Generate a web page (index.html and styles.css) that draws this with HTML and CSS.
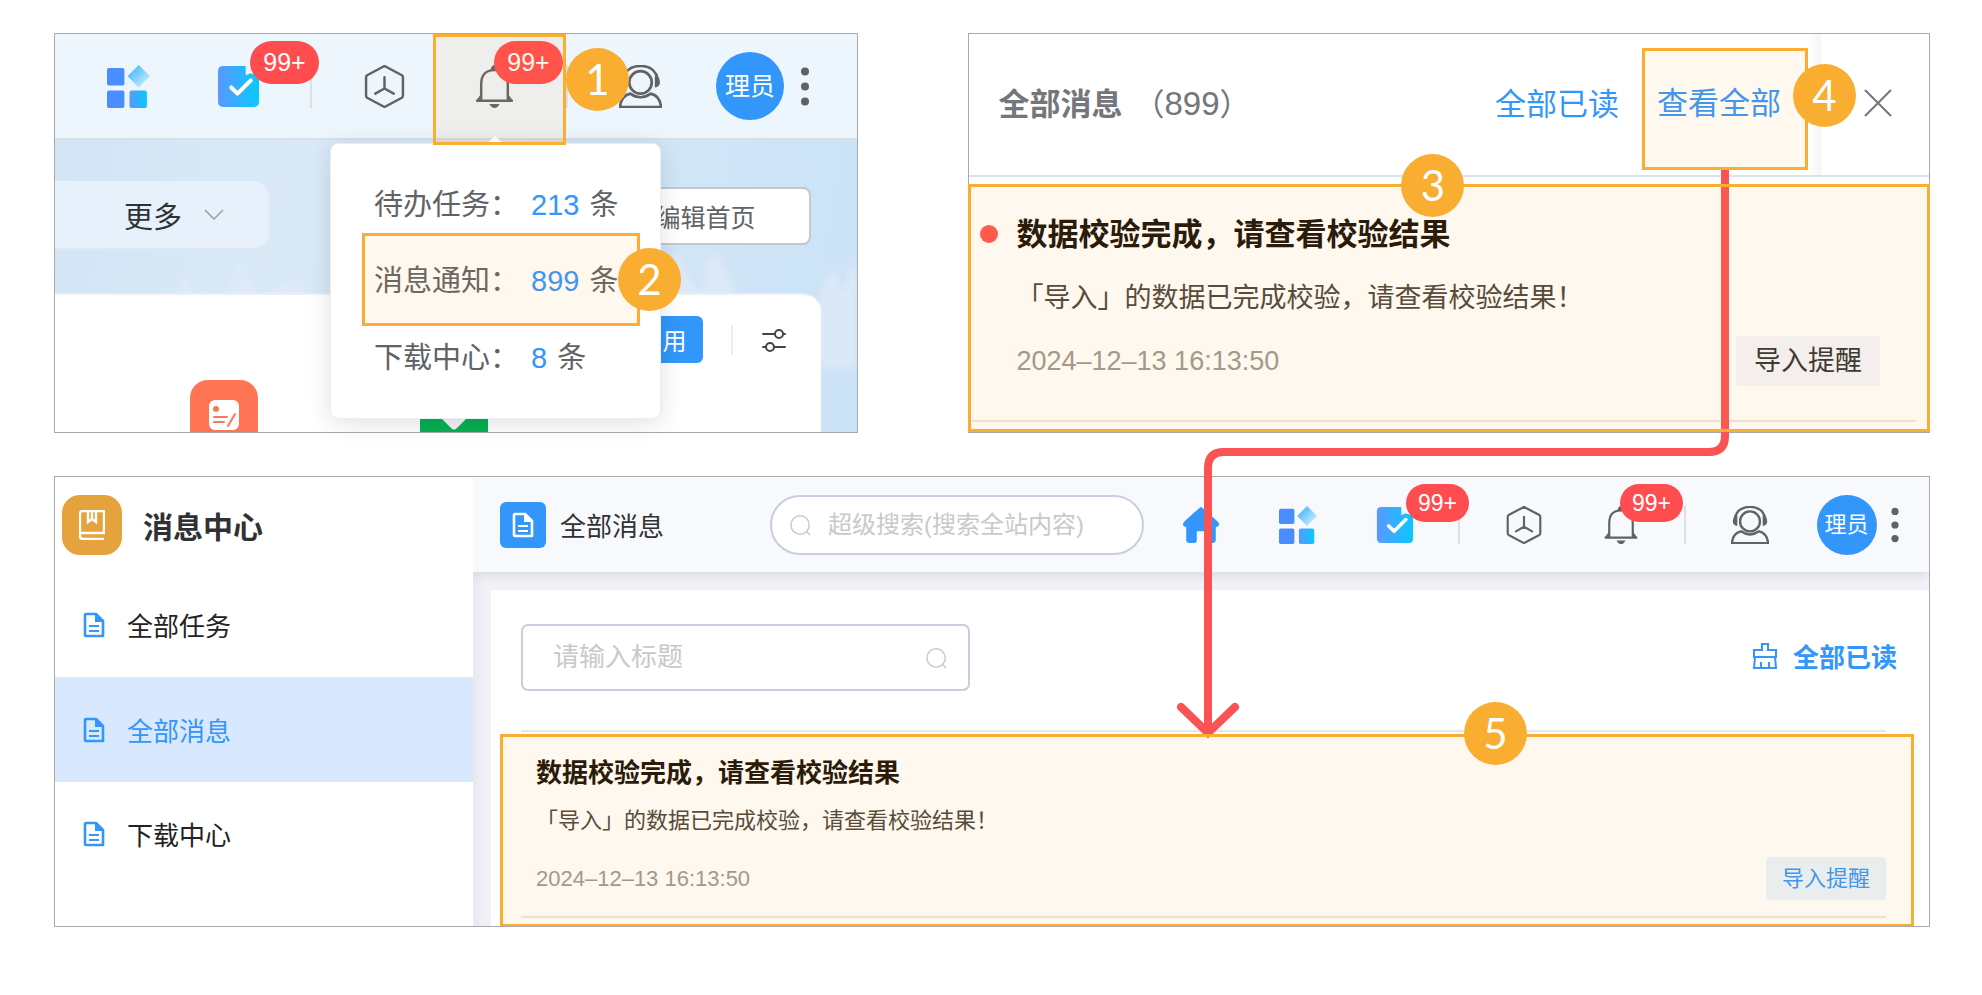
FILE: index.html
```html
<!DOCTYPE html>
<html lang="zh-CN">

<head>
  <meta charset="UTF-8">
  <title>消息中心</title>
  <link rel="stylesheet" href="styles.css">
</head>
<body>
  <!-- shared icons -->
  <svg class="sprite" aria-hidden="true">
    <defs>
      <linearGradient id="blueFade" x1="0" y1="0" x2="1" y2="0">
        <stop offset="0" stop-color="#5a98ff"/>
        <stop offset="1" stop-color="#08c8ff"/>
      </linearGradient>
      <linearGradient id="diamondFade" x1="0.2" y1="0.2" x2="0.9" y2="0.9">
        <stop offset="0" stop-color="#4fbcfd"/>
        <stop offset="1" stop-color="#d0effe"/>
      </linearGradient>
    </defs>
    <symbol id="i-apps" viewBox="0 0 42 42">
      <rect x="0" y="3" width="17" height="17" rx="2" fill="#4a8dff"/>
      <rect x="0" y="25" width="17" height="17" rx="2" fill="#4a8dff"/>
      <rect x="22" y="25" width="17" height="17" rx="2" fill="url(#blueFade)"/>
      <path d="M31 0L42 11L31 22L20 11Z" fill="url(#diamondFade)"/>
    </symbol>
    <symbol id="i-task" viewBox="0 0 42 42">
      <path d="M6 1H28V10L33 8L41 11V36Q41 41 36 41H6Q1 41 1 36V6Q1 1 6 1Z" fill="url(#blueFade)"/>
      <path d="M14 22L20 28L33 15" fill="none" stroke="#fff" stroke-width="4" stroke-linecap="round" stroke-linejoin="round"/>
    </symbol>
    <symbol id="i-hex" viewBox="0 0 42 42">
      <path d="M21 1L38 10Q39 11 39 12V30Q39 31 38 32L21 41L4 32Q3 31 3 30V12Q3 11 4 10ZM21 12V23L12 28M21 23L30 28" fill="none" stroke="#606266" stroke-width="2.4" stroke-linejoin="round" stroke-linecap="round"/>
    </symbol>
    <symbol id="i-bell" viewBox="0 0 42 42">
      <path d="M4 35H38M8 34V19Q8 5 21 5Q34 5 34 19V34" fill="none" stroke="#606266" stroke-width="2.4" stroke-linecap="round"/>
      <path d="M17 5Q18 0 21 0Q24 0 25 5ZM3 35L8 28V35ZM39 35L34 28V35ZM16 38H26Q24 42 21 42Q18 42 16 38Z" fill="#606266"/>
    </symbol>
    <symbol id="i-service" viewBox="0 0 42 42">
      <circle cx="21" cy="17" r="11" fill="none" stroke="#606266" stroke-width="2.6"/>
      <path d="M4 14Q7 1 21 1Q35 1 38 14M11 28Q2 30 1 41H41Q40 30 31 28Q21 35 11 28Z" fill="none" stroke="#606266" stroke-width="2.6"/>
      <path d="M7 10Q2 12 2 17Q2 21 7 22ZM35 10Q40 12 40 17Q40 21 35 22Z" fill="#606266"/>
    </symbol>
    <symbol id="i-more" viewBox="0 0 10 42">
      <circle cx="5" cy="6" r="4" fill="#606266"/>
      <circle cx="5" cy="21" r="4" fill="#606266"/>
      <circle cx="5" cy="36" r="4" fill="#606266"/>
    </symbol>
    <symbol id="i-doc" viewBox="0 0 24 26">
      <path d="M4 2H14L21 9V24H4Q3 24 3 23V3Q3 2 4 2Z" fill="none" stroke="currentColor" stroke-width="2.6" stroke-linejoin="round"/>
      <path d="M13 2L21 10H13ZM7 13H17V15H7ZM7 18H17V20H7Z" fill="currentColor"/>
    </symbol>
    <symbol id="i-search" viewBox="0 0 24 24">
      <path d="M18 19L22 23" stroke="#c8c9cc" stroke-width="1.6"/>
      <circle cx="11" cy="12" r="10" fill="none" stroke="#c8c9cc" stroke-width="1.6"/>
    </symbol>
  </svg>

  <main class="page">
    <section class="panel home">
      <header class="topbar topbar-lg">
        <button class="cell" aria-label="应用"><svg class="icon"><use href="#i-apps"/></svg></button>
        <button class="cell" aria-label="任务"><svg class="icon"><use href="#i-task"/></svg><span class="badge">99+</span></button>
        <span class="sep"></span>
        <button class="cell" aria-label="模块"><svg class="icon"><use href="#i-hex"/></svg></button>
        <div class="cell mark mark-bell">
          <button class="cell bell" aria-label="消息"><svg class="icon"><use href="#i-bell"/></svg><span class="badge">99+</span></button>
          <div class="popup">
            <p class="popup-row">待办任务：<a href="#">213</a> 条</p>
            <p class="popup-row mark mark-notice">消息通知：<a href="#">899</a> 条<span class="step">2</span></p>
            <p class="popup-row">下载中心：<a href="#">8</a> 条</p>
          </div>
          <span class="step">1</span>
        </div>
        <span class="sep"></span>
        <button class="cell" aria-label="客服"><svg class="icon"><use href="#i-service"/></svg></button>
        <div class="cell"><span class="avatar">理员</span></div>
        <button class="more" aria-label="更多操作"><svg><use href="#i-more"/></svg></button>
      </header>
      <div class="home-body">
        <svg class="forest" viewBox="0 0 804 120" preserveAspectRatio="none" aria-hidden="true">
          <path d="M0 120L6 60L14 85L22 75L30 100L46 56L56 90L70 80L90 95L110 70L130 25L142 60L154 40L164 66L186 10L204 52L220 42L242 30L260 80L290 60L320 90L600 60L614 20L622 0L636 30L648 48L654 10L664 4L676 30L688 70L760 66L768 40L780 20L790 44L798 10L804 30V120Z"/>
        </svg>
        <div class="home-bar">
          <button class="more-tab">更多
            <svg viewBox="0 0 20 12" width="20" height="12"><path d="M1 1L10 10L19 1" fill="none" stroke="#96999c" stroke-width="1.4"/></svg>
          </button>
          <button class="edit-home">编辑首页</button>
        </div>
        <div class="home-card">
          <div class="card-bar">
            <button class="apply">用</button>
            <span class="card-sep"></span>
            <svg viewBox="0 0 24 24" width="24" height="24"><path d="M1 6H13M21 6H23M1 19H4M12 19H23" stroke="#444" stroke-width="2" stroke-linecap="round"/><circle cx="17" cy="6" r="4" fill="none" stroke="#444" stroke-width="2"/><circle cx="8" cy="19" r="4" fill="none" stroke="#444" stroke-width="2"/></svg>
          </div>
          <div class="apps">
            <div class="app app-form">
              <svg viewBox="0 0 30 30" width="30" height="30"><rect width="30" height="30" rx="6" fill="#fff"/><circle cx="7" cy="9" r="3" fill="#ff7455"/><path d="M5 17H18M5 22H15M19 26L26 14" stroke="#ff7455" stroke-width="2" stroke-linecap="round"/></svg>
            </div>
            <div class="app app-check">
              <svg viewBox="0 0 30 22" width="30" height="22"><path d="M1 9L12 20Q15 23 18 20L29 9V0H1Z" fill="#f4f4f4"/></svg>
            </div>
          </div>
        </div>
      </div>
    </section>

    <section class="panel drawer">
      <header class="drawer-head">
        <h2>全部消息</h2>
        <span class="count">（<b>899</b>）</span>
        <a class="read-all" href="#">全部已读</a>
        <div class="mark mark-all">
          <a href="#">查看全部</a>
          <span class="step">4</span>
          <svg class="flow" viewBox="0 0 560 570" width="560" height="570" aria-hidden="true">
            <path d="M548 0V266Q548 282 532 282H47Q31 282 31 298V560" />
            <path d="M4 537L31 563L58 537" stroke-linecap="round" />
          </svg>
        </div>
        <span class="edge"></span>
        <button class="close" aria-label="关闭"><svg viewBox="0 0 28 28" width="28" height="28"><path d="M1 1L27 27M27 1L1 27" stroke="#73767a" stroke-width="2"/></svg></button>
      </header>
      <article class="message message-lg mark">
        <span class="unread"></span>
        <h3>数据校验完成，请查看校验结果</h3>
        <p>「导入」的数据已完成校验，请查看校验结果！</p>
        <footer><time>2024–12–13 16:13:50</time><span class="tag">导入提醒</span></footer>
        <hr>
        <span class="step">3</span>
      </article>
    </section>

    <section class="panel center">
      <nav class="sidebar">
        <h2>
          <span class="logo"><svg class="book" viewBox="0 0 26 30"><path d="M25 20V1H4Q1 1 1 4V26Q1 29 4 29H25M2 23H25V20M9 1V12L13 9L17 12V1M13 1V9" fill="none" stroke="#fff" stroke-width="2.4"/></svg></span>
          消息中心
        </h2>
        <a href="#"><svg><use href="#i-doc"/></svg>全部任务</a>
        <a href="#" class="active"><svg><use href="#i-doc"/></svg>全部消息</a>
        <a href="#"><svg><use href="#i-doc"/></svg>下载中心</a>
      </nav>
      <div class="main">
        <header class="topbar">
          <span class="page-icon"><svg><use href="#i-doc"/></svg></span>
          <h3>全部消息</h3>
          <label class="search">
            <svg><use href="#i-search"/></svg>
            <input type="text" aria-label="超级搜索" placeholder="超级搜索(搜索全站内容)">
          </label>
          <button class="cell" aria-label="首页"><svg class="icon" viewBox="0 0 36 36"><path d="M18 1Q19 1 34 15Q37 19 32 20V32Q32 35 29 35H25Q23 35 23 33V24H14V33Q14 35 12 35H7Q4 35 4 32V20Q-1 19 2 15Q17 1 18 1Z" fill="#3296fa"/></svg></button>
          <button class="cell" aria-label="应用"><svg class="icon"><use href="#i-apps"/></svg></button>
          <button class="cell" aria-label="任务"><svg class="icon"><use href="#i-task"/></svg><span class="badge">99+</span></button>
          <span class="sep"></span>
          <button class="cell" aria-label="模块"><svg class="icon"><use href="#i-hex"/></svg></button>
          <button class="cell bell" aria-label="消息"><svg class="icon"><use href="#i-bell"/></svg><span class="badge">99+</span></button>
          <span class="sep"></span>
          <button class="cell" aria-label="客服"><svg class="icon"><use href="#i-service"/></svg></button>
          <div class="cell"><span class="avatar">理员</span></div>
          <button class="more" aria-label="更多操作"><svg><use href="#i-more"/></svg></button>
        </header>
        <div class="content">
          <div class="filter">
            <label class="title-input">
              <input type="text" aria-label="标题" placeholder="请输入标题">
              <svg><use href="#i-search"/></svg>
            </label>
            <a class="clear" href="#">
              <svg viewBox="0 0 26 26" width="26" height="26"><path d="M10 7V1H16V7H24V14H2V7ZM3 14L2 25H24L23 14M9 25V19M17 25V19" fill="none" stroke="#3296fa" stroke-width="2"/></svg>
              全部已读
            </a>
          </div>
          <article class="message mark">
            <h3>数据校验完成，请查看校验结果</h3>
            <p>「导入」的数据已完成校验，请查看校验结果！</p>
            <footer><time>2024–12–13 16:13:50</time><span class="tag">导入提醒</span></footer>
            <hr>
            <span class="step">5</span>
          </article>
        </div>
      </div>
    </section>
  </main>
</body>
</html>
```
FILE: styles.css
```css
* { box-sizing: border-box; }
body {
  margin: 0;
  background: #fff;
  color: #303133;
  font-family: "Liberation Sans", "Noto Sans CJK SC", sans-serif;
}
h2, h3, p { margin: 0; font-weight: 400; }
a { color: #3296fa; text-decoration: none; }
button { padding: 0; border: 0; background: none; font: inherit; color: inherit; }
input { min-width: 0; flex: 1; border: 0; outline: 0; background: none; font: inherit; }
input::placeholder { color: #c8c9cc; opacity: 1; }
svg { display: block; flex: none; }
.sprite { position: absolute; width: 0; height: 0; }

.page {
  display: grid;
  grid-template-columns: 804fr 961fr;
  gap: 43px 110px;
  padding: 33px 52px 67px 54px;
}
.panel { border: 1px solid #a8aaac; background: #fff; }

/* highlighted area with its step number */
.mark { position: relative; }
.mark::after {
  content: "";
  position: absolute;
  inset: 0;
  z-index: 3;
  border: 3px solid #f9ad31;
  background: rgba(255, 165, 40, 0.08);
  pointer-events: none;
}
.step {
  position: absolute;
  z-index: 4;
  width: 63px;
  height: 63px;
  border-radius: 50%;
  background: #f9ad31;
  color: #fff;
  font: 42px/63px Lato, sans-serif;
  text-align: center;
}

/* top bar */
.topbar {
  --cell: 97px;
  --icon: 38px;
  display: flex;
  align-items: center;
  height: 95px;
  padding: 0 29px 0 27px;
  background: #f8f9fc;
  box-shadow: 0 2px 12px rgba(0, 0, 0, 0.12);
  position: relative;
}
.cell {
  position: relative;
  display: flex;
  flex: none;
  align-items: center;
  justify-content: center;
  width: var(--cell);
  height: 100%;
}
.icon { width: var(--icon); height: var(--icon); }
.sep { flex: none; width: 2px; height: var(--icon); margin: 0 15px; background: #dcdfe3; }
.badge {
  position: absolute;
  top: 7px;
  left: 60px;
  width: 63px;
  height: 38px;
  border-radius: 19px;
  background: #ff4d4f;
  color: #fff;
  font-size: 23px;
  line-height: 38px;
  text-align: center;
  z-index: 1;
}
.bell .badge { left: 48px; }
.avatar {
  width: 60px;
  height: 60px;
  border-radius: 50%;
  background: #3296fa;
  color: #fff;
  font-size: 22px;
  line-height: 60px;
  text-align: center;
}
.more { margin-left: -5px; }
.more svg { width: 10px; height: var(--icon); }
.topbar-lg {
  --cell: 110px;
  --icon: 43px;
  height: 106px;
  padding: 0 0 0 18px;
  border-bottom: 2px solid #dadde2;
  background: #edf5fd;
  box-shadow: none;
}
.topbar-lg .sep { margin: 0 17px; }
.topbar-lg .badge { left: 67px; width: 69px; height: 43px; border-radius: 22px; font-size: 25px; line-height: 43px; }
.topbar-lg .bell .badge { left: 55px; }
.topbar-lg .avatar { width: 68px; height: 68px; font-size: 25px; line-height: 68px; }

/* home panel */
.home { display: flex; flex-direction: column; }
.mark-bell::after { inset: 0 -17px -7px -6px; }
.mark-bell > .step { top: 14px; left: 127px; }
.popup {
  position: absolute;
  top: 109px;
  left: -109px;
  z-index: 2;
  width: 331px;
  padding: 33px 20px 28px 31px;
  border: 1px solid #e8edf6;
  border-radius: 8px;
  background: #fff;
  box-shadow: 0 4px 24px rgba(0, 0, 0, 0.12);
  color: #606266;
  font-size: 29px;
}
.popup::before {
  content: "";
  position: absolute;
  top: -8px;
  left: 155px;
  border: solid transparent;
  border-width: 0 9px 8px;
  border-bottom-color: #fff;
}
.popup-row { height: 56px; padding-left: 12px; line-height: 56px; white-space: nowrap; }
.popup-row a { margin: 0 2px 0 12px; }
.popup-row:last-child { height: 64px; line-height: 64px; }
.mark-notice { height: 93px; line-height: 97px; }
.mark-notice .step { top: 15px; left: 256px; }
.home-body {
  position: relative;
  height: 292px;
  padding-top: 41px;
  overflow: hidden;
  background: linear-gradient(100deg, #d3e5f5, #d9e9f8 30%, #d4e7f7 60%, #cbe2f6);
}
.forest { position: absolute; top: 108px; left: 0; width: 100%; height: 120px; fill: #e2ebf9; opacity: 0.7; filter: blur(3px); }
.home-bar { position: relative; display: flex; align-items: center; justify-content: space-between; padding-right: 46px; }
.more-tab {
  display: flex;
  align-items: center;
  gap: 22px;
  width: 214px;
  height: 69px;
  padding-left: 69px;
  border-bottom: 2px solid #e3e6ea;
  border-radius: 0 16px 16px 0;
  background: #e6f1fc;
  font-size: 29px;
}
.edit-home {
  height: 58px;
  padding: 0 54px;
  border: 2px solid #c3c7cf;
  border-radius: 8px;
  background: #fff;
  color: #606266;
  font-size: 25px;
}
.home-card {
  position: relative;
  height: 200px;
  margin: 43px 36px 0 0;
  padding: 21px 35px 0 135px;
  border-top: 2px solid #eceef1;
  border-radius: 0 18px 0 0;
  background: #fff;
}
.card-bar { display: flex; align-items: center; justify-content: flex-end; }
.apply { width: 90px; height: 47px; padding-right: 17px; border-radius: 6px; background: #3296fa; color: #fff; font-size: 24px; text-align: right; }
.card-sep { width: 2px; height: 30px; margin: 0 29px 0 28px; background: #ebedf0; }
.apps { display: flex; gap: 162px; margin-top: 17px; }
.app { display: flex; justify-content: center; width: 68px; height: 68px; padding-top: 20px; border-radius: 18px; }
.app-form { background: #ff7455; }
.app-check { padding-top: 28px; background: #07b053; }

/* message drawer */
.drawer-head {
  display: flex;
  align-items: center;
  height: 143px;
  margin-bottom: 7px;
  padding: 0 37px 4px 29px;
  border-bottom: 2px solid #dce1e8;
  font-size: 31px;
}
.drawer-head h2 { padding-bottom: 3px; color: #73767a; font-size: 31px; font-weight: 700; }
.count { margin-left: 11px; padding-bottom: 3px; color: #73767a; }
.count b { font-size: 33px; font-weight: 400; }
.read-all { margin-left: auto; padding: 0 23px 3px 0; }
.mark-all { width: 166px; height: 122px; margin-top: 12px; padding: 0 0 12px 15px; line-height: 112px; }
.mark-all .step { top: 16px; left: 151px; line-height: 63px; }
.flow { position: absolute; z-index: 2; top: 122px; left: -465px; fill: none; stroke: #fb5353; stroke-width: 8px; }
.edge { align-self: stretch; width: 13px; margin: 0 43px -4px 0; background: linear-gradient(90deg, #fff, #f4f5f6); }

/* message row */
.message { margin: 2px 15px -1px 9px; padding: 21px 28px 9px 36px; font-size: 22px; }
.message h3 { color: #181008; font-size: 26px; font-weight: 700; line-height: 36px; }
.message p { margin-top: 14px; color: #4a443c; line-height: 32px; }
.message footer { display: flex; align-items: center; justify-content: space-between; margin-top: 20px; }
.message time { color: #9c9892; }
.message hr { height: 2px; margin: 16px 0 0 -15px; border: 0; background: #ebe5e0; }
.message .step { top: -32px; left: 964px; }
.tag { padding: 0 16px; border-radius: 4px; background: #e9f4ff; color: #3296fa; line-height: 43px; }
.message-lg { margin: 0 -1px -1px; padding: 31px 50px 10px 48px; font-size: 27px; }
.message-lg h3 { font-size: 31px; line-height: 40px; }
.message-lg p { margin-top: 23px; line-height: 40px; }
.message-lg footer { margin-top: 18px; }
.message-lg hr { margin: 34px -36px 0 -44px; }
.message-lg .step { top: -30px; left: 433px; }
.message-lg .tag { padding: 0 18px; background: #f3f6fe; color: #303133; line-height: 50px; }
.unread { position: absolute; top: 41px; left: 12px; width: 18px; height: 18px; border-radius: 50%; background: #ff554e; }

/* message centre */
.center { grid-column: 1 / -1; display: flex; }
.sidebar { width: 418px; font-size: 26px; }
.sidebar h2 { display: flex; align-items: center; gap: 21px; height: 95px; padding-left: 7px; font-size: 30px; font-weight: 700; }
.logo { display: flex; align-items: center; justify-content: center; width: 60px; height: 60px; border-radius: 18px; background: #e6a23c; }
.sidebar a { display: flex; align-items: center; gap: 21px; height: 105px; padding-left: 27px; color: #222; }
.sidebar svg { width: 24px; height: 26px; color: #3296fa; }
.sidebar .book { width: 26px; height: 30px; }
.sidebar a { margin-top: -1px; }
.sidebar h2 + a, .sidebar .active { margin-top: 0; }
.sidebar .active { background: #d8e8fe; color: #3296fa; }
.main { display: flex; flex: 1; flex-direction: column; min-width: 0; overflow: clip; background: #f0f2f7; box-shadow: inset 6px 0 8px rgba(0, 0, 0, 0.04); }
.page-icon { display: flex; align-items: center; justify-content: center; width: 46px; height: 46px; border-radius: 6px; background: #3296fa; color: #fff; }
.page-icon svg { width: 24px; height: 26px; }
.topbar h3 { margin: 0 auto 0 14px; font-size: 26px; }
.search {
  display: flex;
  align-items: center;
  gap: 14px;
  width: 374px;
  height: 60px;
  margin-right: 8px;
  padding: 0 18px;
  border: 2px solid #c6cee0;
  border-radius: 30px;
  background: #fff;
  font-size: 24px;
}
.search svg, .title-input svg { width: 22px; height: 22px; }
.content { margin: 18px 0 0 18px; background: #fff; }
.filter { display: flex; align-items: center; justify-content: space-between; margin: 0 43px 0 30px; padding: 34px 0 39px; border-bottom: 2px solid #e4e6ea; }
.title-input { display: flex; align-items: center; width: 449px; height: 67px; padding: 0 20px 0 28px; border: 2px solid #c6cee0; border-radius: 7px; font-size: 26px; }
.clear { display: flex; align-items: center; gap: 15px; margin-right: -11px; padding-bottom: 4px; font-size: 26px; font-weight: 700; }
```
